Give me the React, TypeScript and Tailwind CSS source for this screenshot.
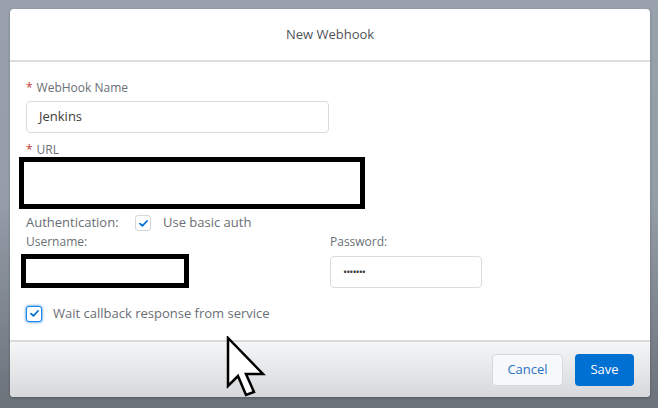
import React from "react";

const font = { fontFamily: '"Open Sans", "Liberation Sans", sans-serif' };

function Check({ focus = false }: { focus?: boolean }) {
  return (
    <span
      className={`flex h-4 w-4 items-center justify-center rounded-[3px] bg-white ${
        focus
          ? "border border-[#1589ee] shadow-[0_0_3px_#0070d2]"
          : "border border-[#d4d6d9]"
      }`}
    >
      <svg width="9" height="7" viewBox="0 0 9 7">
        <path d="M1 3.6 L3.4 5.8 L8 1" fill="none" stroke="#0070d2" strokeWidth="1.8" strokeLinecap="round" strokeLinejoin="round" />
      </svg>
    </span>
  );
}

export default function App() {
  return (
    <div
      className="relative h-[408px] w-[658px] overflow-hidden bg-gradient-to-b from-[#99a2ac] via-[#949da8] to-[#6c727a] pl-[10px] pt-[9px]"
      style={font}
    >
      {/* Modal */}
      <div className="flex h-[388px] w-[640px] flex-col overflow-hidden rounded-[4px] bg-white shadow-[0_1px_3px_rgba(0,0,0,0.25)]">
        {/* Header */}
        <div className="flex h-[53px] items-center justify-center border-b-2 border-[#dcdddf] text-[13px] text-[#505459]">
          New Webhook
        </div>

        {/* Body */}
        <div className="h-[278px] px-4 pt-[18px]">
          <div className="flex h-4 items-center text-[12px] text-[#6a6f75]">
            <span className="mr-1 text-[#c23934]">*</span>WebHook Name
          </div>
          <div className="mt-[5px] flex h-[32px] w-[303px] items-center rounded-[4px] border border-[#dddbda] px-3 text-[13px] text-[#3e3e3c]">
            Jenkins
          </div>

          <div className="mt-[10px] flex h-[14px] items-center text-[12px] text-[#6a6f75]">
            <span className="mr-1 text-[#c23934]">*</span>URL
          </div>
          <div className="-ml-[7px] h-[52px] w-[346px] border-[5px] border-black bg-white" />

          <div className="mt-[6px] flex h-4 items-center text-[13px] text-[#696e74]">
            <span className="w-[109px]">Authentication:</span>
            <Check />
            <span className="ml-3">Use basic auth</span>
          </div>

          <div className="mt-[4px] flex text-[12px] text-[#6a6f75]">
            <div className="w-[304px]">
              <div className="flex h-[14px] items-center">Username:</div>
              <div className="-ml-[5px] mt-[5px] h-[34px] w-[168px] border-[5px] border-black bg-white" />
            </div>
            <div>
              <div className="flex h-[14px] items-center">Password:</div>
              <div className="mt-[7px] flex h-[32px] w-[152px] items-center rounded-[4px] border border-[#dddbda] px-3 text-[11px] tracking-[-1px] text-[#3e3e3c]">
                •••••••
              </div>
            </div>
          </div>

          <div className="mt-[17px] flex h-[17px] items-center text-[13px] text-[#696e74]">
            <Check focus />
            <span className="ml-[11px]">Wait callback response from service</span>
          </div>
        </div>

        {/* Footer */}
        <div className="flex flex-1 items-start justify-end gap-3 border-t-2 border-[#d9dadc] bg-gradient-to-b from-[#f5f6f7] to-[#d6d8db] pr-4 pt-[12px]">
          <button className="h-[32px] w-[71px] rounded-[4px] border border-[#d8d8d8] bg-[#f7f8f9] text-[13px] text-[#2a73c5]">
            Cancel
          </button>
          <button className="h-[32px] w-[59px] rounded-[4px] bg-[#0070d2] text-[13px] text-white">
            Save
          </button>
        </div>
      </div>

      {/* Mouse cursor */}
      <svg className="absolute left-[226px] top-[336px]" width="42" height="64" viewBox="0 0 42 64">
        <path
          d="M2 2 L2 50 L12 40 L20 59 L28 56 L20 38 L37 38 Z"
          fill="white"
          stroke="black"
          strokeWidth="2.5"
          strokeLinejoin="miter"
        />
      </svg>
    </div>
  );
}
